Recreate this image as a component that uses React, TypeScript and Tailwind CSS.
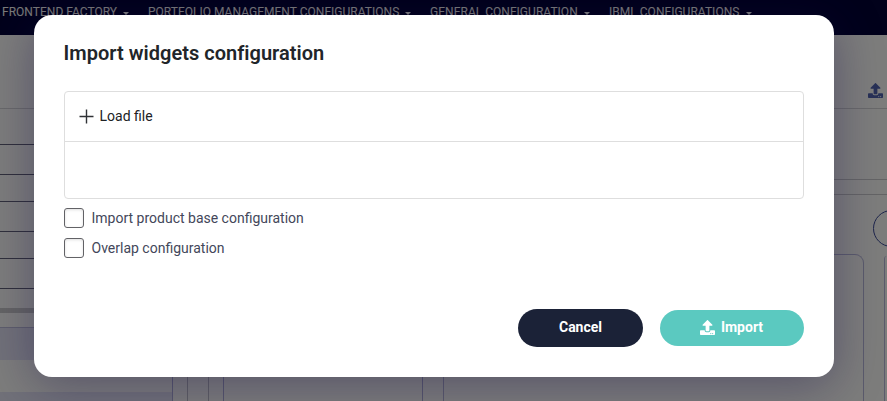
import { FaUpload } from "react-icons/fa";

const MENU = [
  { label: "FRONTEND FACTORY", width: "w-[146px]", text: "w-[115px]" },
  { label: "PORTFOLIO MANAGEMENT CONFIGURATIONS", width: "w-[282px]", text: "w-[251px]" },
  { label: "GENERAL CONFIGURATION", width: "w-[179px]", text: "w-[148px]" },
  { label: "IBML CONFIGURATIONS", width: "w-[162px]", text: "w-[131px]" },
];

const ROWS = ["h-[36px]", "h-[30px]", "h-[27px]", "h-[30px]", "h-[27px]", "h-[30px]"];

function NavBar() {
  return (
    <nav className="flex h-[35px] shrink-0 bg-[#030336] pl-[2px] pt-[3px] text-[12px] leading-[18px] text-[#f4f4f4]">
      {MENU.map((item) => (
        <div key={item.label} className={`flex shrink-0 whitespace-nowrap ${item.width}`}>
          <span className={`tracking-[0.002em] ${item.text}`}>{item.label}</span>
          <span className="ml-[6px] mt-[9px] h-0 w-0 border-x-[3px] border-t-[3px] border-x-transparent border-t-white" />
        </div>
      ))}
    </nav>
  );
}

function Backdrop() {
  return (
    <div className="flex h-full flex-col bg-[#fafaf8]">
      <NavBar />
      <header className="flex h-[74px] shrink-0 justify-end border-b border-[#d2d2d4] pr-[4px] pt-[48px]">
        <FaUpload className="h-[15px] w-[15px] text-[#5063ae]" />
      </header>
      <div className="flex min-h-0 flex-1">
        <aside className="flex w-[173px] shrink-0 flex-col">
          {ROWS.map((h, i) => (
            <div key={i} className={`shrink-0 border-b border-[#616176] ${h}`} />
          ))}
          <div className="mt-[19px] h-[5px] shrink-0 bg-[#c9c9c9]" />
          <div className="mt-[14px] h-[33px] shrink-0 border-t border-[#bcbcd8] bg-[#e3e3f2]" />
          <div className="mt-[32px] flex-1 bg-[#e3e3f2]" />
        </aside>
        <div className="-ml-px w-[16px] border-x border-l-[#aeaed8] border-r-[#bebec6]" />
        <div className="ml-[20px] w-[16px] border-x border-l-[#bebec6] border-r-[#aeaed8]" />
        <div className="w-[199px] border-r border-[#aeaed8]" />
        <main className="flex flex-1 flex-col">
          <div className="h-[71px] shrink-0 border-b border-[#c8c8cb]" />
          <div className="h-[15px] shrink-0 border-b border-[#c8c8cb]" />
          <div className="flex h-[59px] shrink-0 justify-end pt-[15px]">
            <div className="h-[37px] w-[14px] overflow-hidden">
              <div className="h-[37px] w-[60px] rounded-full border border-[#3c4a98]" />
            </div>
          </div>
          <div className="ml-[20px] flex flex-1 gap-[20px]">
            <div className="w-[421px] shrink-0 rounded-t-[9px] border border-b-0 border-[#b7b7d8]" />
            <div className="mt-[2px] flex-1 rounded-tl-[4px] border-l border-[#b7b7d8]" />
          </div>
        </main>
      </div>
    </div>
  );
}

function Option({ label }: { label: string }) {
  return (
    <label className="flex h-[30px] items-center gap-[7.5px] text-[14px] text-[#43475a]">
      <span className="h-[20px] w-[20px] rounded-[3px] border border-[#626266] bg-white shadow-[inset_0_1px_3px_rgba(0,0,0,0.13)]" />
      <span>{label}</span>
    </label>
  );
}

function ImportDialog() {
  return (
    <section className="h-[362px] w-[800px] rounded-[18px] bg-white px-[30px] pt-[24px] shadow-[0_8px_48px_rgba(20,12,70,0.38)]">
      <h2 className="-ml-[0.5px] text-[20px] font-semibold leading-[28px] tracking-[0.001em] text-[#212529]">
        Import widgets configuration
      </h2>
      <div className="mt-[24px] h-[108px] rounded-[4px] border border-[#dedede]">
        <div className="flex h-[50px] items-center gap-[6px] border-b border-[#dedede] pl-[13.5px] text-[14px] font-normal text-[#202225]">
          <svg className="h-[15px] w-[15px]" viewBox="0 0 15 15" fill="none" stroke="#303236" strokeWidth="1.4">
            <path d="M7.5 .5v14M.5 7.5h14" />
          </svg>
          <span>Load file</span>
        </div>
      </div>
      <div className="mt-[4px]">
        <Option label="Import product base configuration" />
        <Option label="Overlap configuration" />
      </div>
      <div className="mt-[46px] flex items-center justify-end gap-[17px] text-[14px] font-bold text-white">
        <button className="h-[38px] w-[125px] rounded-full bg-[#1b2237] pb-[2px]">Cancel</button>
        <button className="flex h-[36px] w-[144px] items-center justify-center gap-[6px] rounded-full bg-[#5bc9c0] pb-[2px] pr-px">
          <FaUpload className="h-[15px] w-[15px]" />
          <span>Import</span>
        </button>
      </div>
    </section>
  );
}

export default function App() {
  return (
    <div className="relative h-[401px] w-[887px] overflow-hidden font-['Roboto',sans-serif]">
      <Backdrop />
      <div className="absolute inset-0 flex items-start bg-black/50 pl-[34px] pt-[15px]">
        <ImportDialog />
      </div>
    </div>
  );
}
